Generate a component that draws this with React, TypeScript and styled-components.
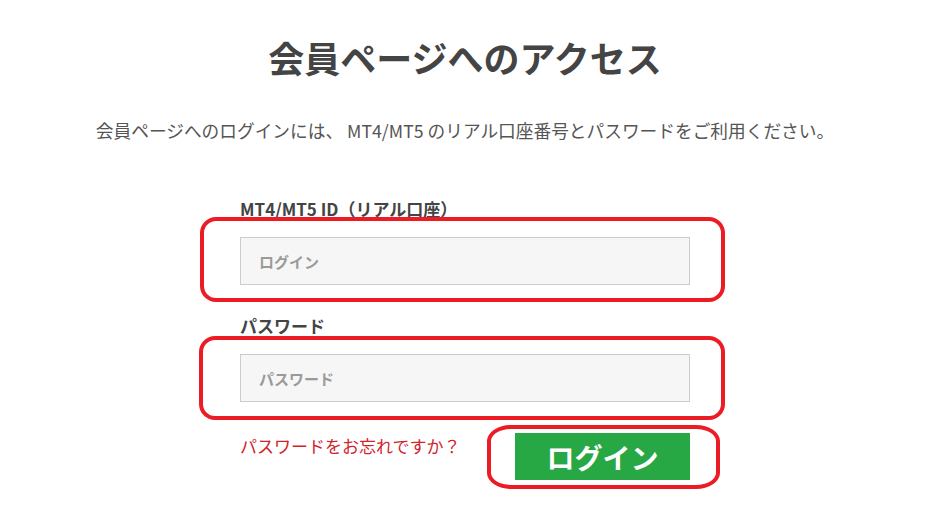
import React from "react";
import styled, { createGlobalStyle } from "styled-components";

const GlobalStyle = createGlobalStyle`
  html, body { margin: 0; padding: 0; background: #ffffff; }
  body { font-family: "Noto Sans CJK JP", "Noto Sans", sans-serif; color: #444; }
  * { box-sizing: border-box; }
`;

const Page = styled.div`
  width: 930px;
  min-height: 525px;
  padding-top: 32px;
  padding-bottom: 40px;
  display: flex;
  flex-direction: column;
  align-items: center;
`;

const Title = styled.h1`
  margin: 0;
  font-size: 36px;
  line-height: 50px;
  font-weight: 700;
  color: #444;
  letter-spacing: 0;
`;

const Lead = styled.p`
  margin: 36px 0 0;
  font-size: 17.7px;
  line-height: 24px;
  color: #555;
  font-weight: 400;
`;

const Form = styled.form`
  width: 450px;
  margin-top: 55px;
  display: flex;
  flex-direction: column;
`;

const Field = styled.div<{ $gap?: number }>`
  display: flex;
  flex-direction: column;
  gap: 16px;
  margin-top: ${(p) => p.$gap ?? 0}px;
`;

const Label = styled.label`
  font-size: 17px;
  line-height: 24px;
  font-weight: 700;
  color: #444;
`;

const InputWrap = styled.div`
  position: relative;
`;

const Input = styled.input`
  display: block;
  width: 450px;
  height: 48px;
  padding: 0 18px;
  background: #f6f6f6;
  border: 1px solid #cccccc;
  border-radius: 0;
  font-family: inherit;
  font-size: 15px;
  font-weight: 700;
  color: #444;
  outline: none;
  &::placeholder { color: #9a9a9a; opacity: 1; }
`;

const Annotation = styled.span<{ $top: number; $right: number; $bottom: number; $left: number; $radius: string }>`
  position: absolute;
  top: ${(p) => p.$top}px;
  right: ${(p) => p.$right}px;
  bottom: ${(p) => p.$bottom}px;
  left: ${(p) => p.$left}px;
  border: 4px solid #ed1c24;
  border-radius: ${(p) => p.$radius};
  pointer-events: none;
`;

const BottomRow = styled.div`
  margin-top: 31px;
  display: flex;
  justify-content: space-between;
  align-items: flex-start;
`;

const Forgot = styled.a`
  margin-top: 1px;
  font-size: 17px;
  line-height: 24px;
  color: #d2232a;
  text-decoration: none;
`;

const ButtonWrap = styled.div`
  position: relative;
`;

const LoginButton = styled.button`
  display: flex;
  align-items: center;
  justify-content: center;
  width: 175px;
  height: 47px;
  background: #28a745;
  border: none;
  border-radius: 0;
  color: #ffffff;
  font-family: inherit;
  font-size: 28px;
  font-weight: 700;
  padding: 0;
`;

export default function App() {
  return (
    <>
      <GlobalStyle />
      <Page>
        <Title>会員ページへのアクセス</Title>
        <Lead>会員ページへのログインには、 MT4/MT5 のリアル口座番号とパスワードをご利用ください。</Lead>
        <Form onSubmit={(e) => e.preventDefault()}>
          <Field>
            <Label>MT4/MT5 ID（リアル口座）</Label>
            <InputWrap>
              <Input placeholder="ログイン" />
              <Annotation $top={-20} $right={-35} $bottom={-17} $left={-40} $radius="16px" />
            </InputWrap>
          </Field>
          <Field $gap={29}>
            <Label>パスワード</Label>
            <InputWrap>
              <Input type="password" placeholder="パスワード" />
              <Annotation $top={-18} $right={-35} $bottom={-18} $left={-41} $radius="16px" />
            </InputWrap>
          </Field>
          <BottomRow>
            <Forgot href="#">パスワードをお忘れですか？</Forgot>
            <ButtonWrap>
              <LoginButton type="submit">ログイン</LoginButton>
              <Annotation $top={-8} $right={-30} $bottom={-9} $left={-28} $radius="24px / 16px" />
            </ButtonWrap>
          </BottomRow>
        </Form>
      </Page>
    </>
  );
}
